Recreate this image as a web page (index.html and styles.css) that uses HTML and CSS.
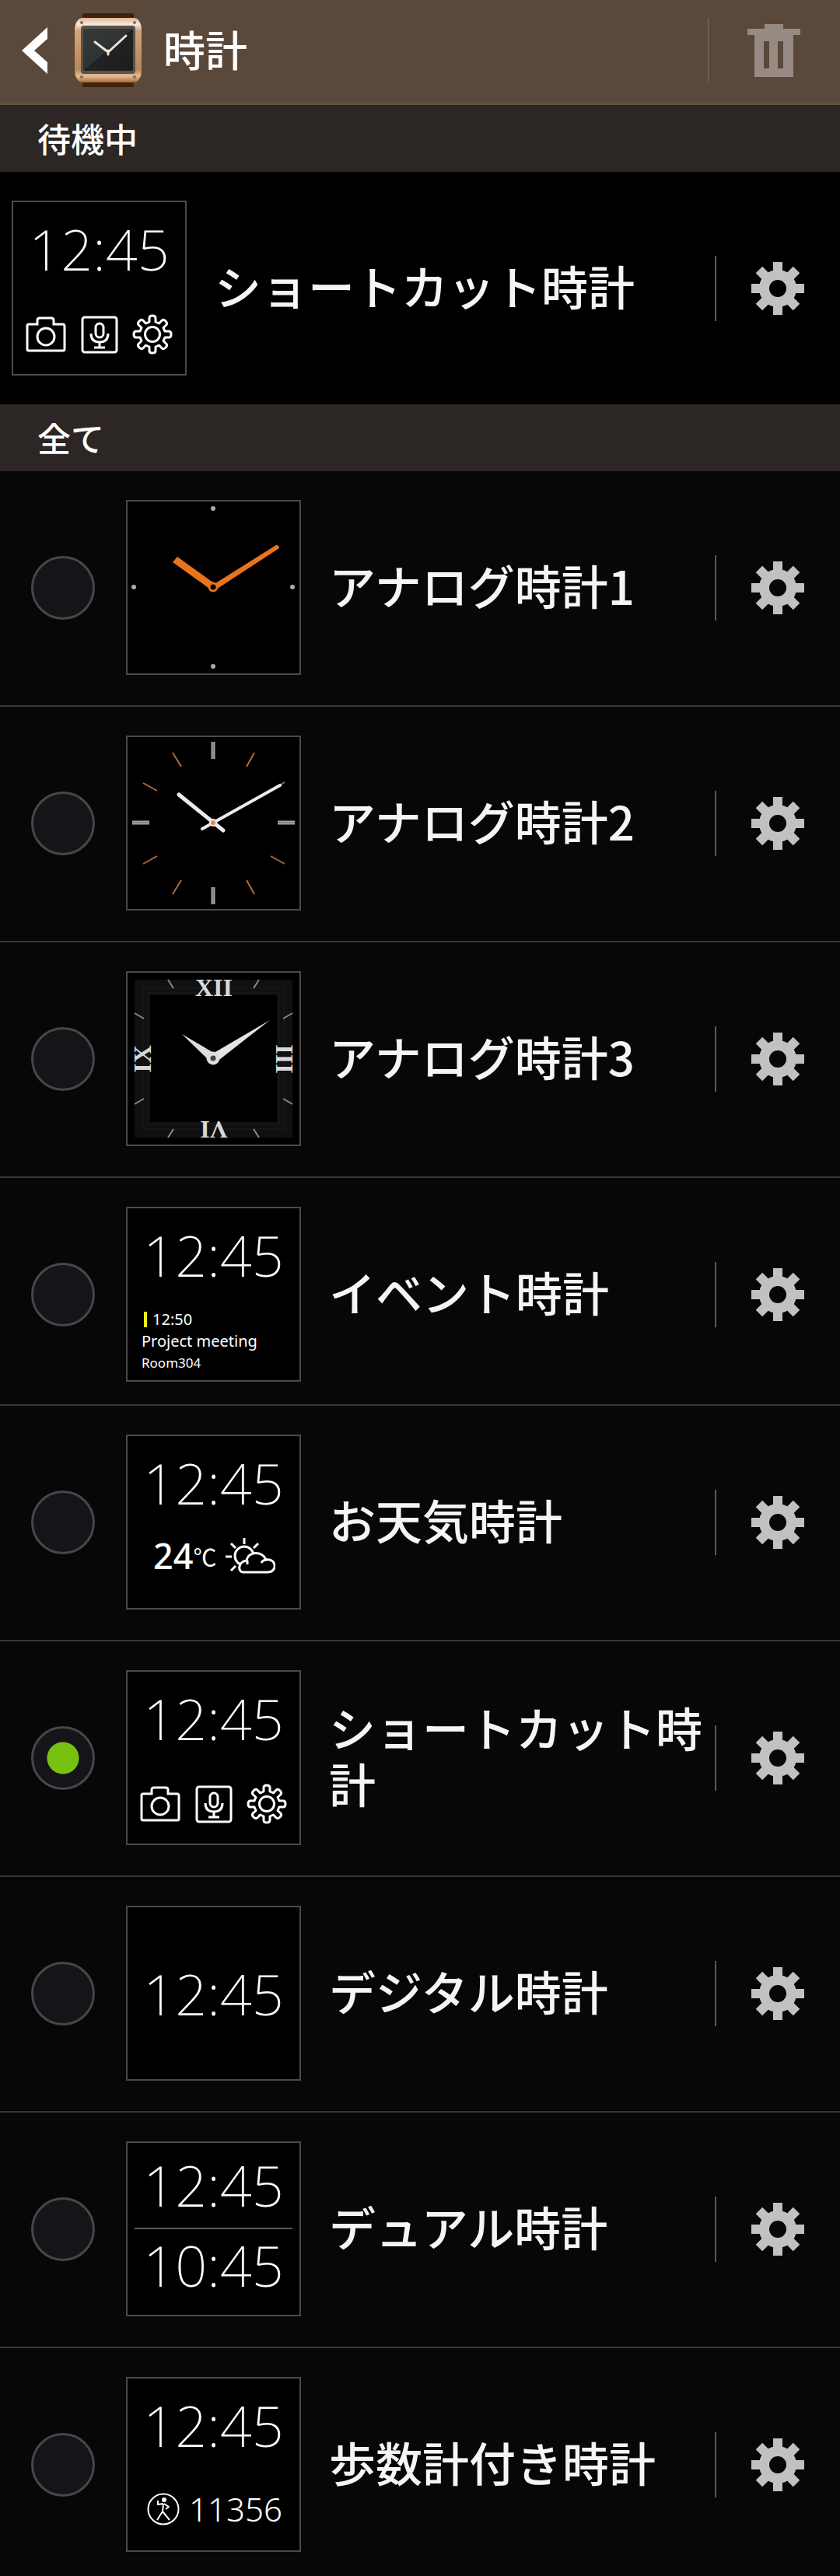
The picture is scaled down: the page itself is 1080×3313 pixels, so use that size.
FILE: index.html
```html
<!DOCTYPE html>
<html lang="ja">
<head>
    <meta charset="UTF-8">
    <meta name="viewport" content="width=device-width, initial-scale=1.0">
    <title>時計</title>
    <link rel="stylesheet" href="styles.css">
</head>
<body>
    <!-- Shared icons -->
    <svg class="sprite" aria-hidden="true">
        <symbol id="gear" viewBox="-34 -34 68 68">
            <circle r="17.5" fill="none" stroke="#c1c1c1" stroke-width="13"/>
            <g fill="#c1c1c1">
                <path id="teeth" d="M-6 -34H6V-21H-6ZM-6 21H6V34H-6ZM-34 -6H-21V6H-34ZM21 -6H34V6H21Z"/>
                <use href="#teeth" transform="rotate(45)"/>
            </g>
        </symbol>
        <symbol id="camera" viewBox="0 0 52 52">
            <g fill="none" stroke="#fff" stroke-width="3">
                <path d="M4 13H15V8Q15 5 18 5H33Q36 5 36 8V13H48Q50 13 50 16V45Q50 47 48 47H4Q2 47 2 45V15Q2 13 4 13Z"/>
                <circle cx="26" cy="29" r="11"/>
            </g>
        </symbol>
        <symbol id="mic" viewBox="0 0 52 52">
            <g fill="none" stroke="#fff" stroke-width="3">
                <rect x="4" y="4" width="44" height="45" rx="3"/>
                <rect x="21" y="12" width="10" height="18" rx="5"/>
                <path d="M15 25Q15 36 26 36Q37 36 37 25M26 36V43M19 43H33"/>
            </g>
        </symbol>
        <symbol id="cog" viewBox="-26 -26 52 52">
            <g fill="none" stroke="#fff" stroke-width="3" stroke-linejoin="round">
                <circle r="9.5"/>
                <path d="M-4 -16V-21Q-4 -24 0 -24Q4 -24 4 -21V-16L8.500 -14L12 -17.700Q14.100 -19.800 17 -17Q19.800 -14.100 17.700 -12L14 -8.500L16 -4H21Q24 -4 24 0Q24 4 21 4H16L14 8.500L17.700 12Q19.800 14.100 17 17Q14.100 19.800 12 17.700L8.500 14L4 16V21Q4 24 0 24Q-4 24 -4 21V16L-8.500 14L-12 17.700Q-14.100 19.800 -17 17Q-19.800 14.100 -17.700 12L-14 8.500L-16 4H-21Q-24 4 -24 0Q-24 -4 -21 -4H-16L-14 -8.500L-17.700 -12Q-19.800 -14.100 -17 -17Q-14.100 -19.800 -12 -17.700L-8.500 -14Z"/>
            </g>
        </symbol>
    </svg>

    <header class="header">
        <button class="back-btn" aria-label="戻る">
            <svg width="34" height="62" viewBox="0 0 34 62"><path d="M33 1V16L16 31L33 46V61L0 31Z" fill="#fff"/></svg>
        </button>
        <svg class="app-icon" width="88" height="96" viewBox="0 0 88 96">
            <defs>
                <linearGradient id="gold" x1="0" y1="0" x2="0" y2="1">
                    <stop offset="0" stop-color="#e0b898"/>
                    <stop offset=".1" stop-color="#f8e8dc"/>
                    <stop offset=".2" stop-color="#d3a47c"/>
                    <stop offset=".8" stop-color="#b88655"/>
                    <stop offset=".9" stop-color="#e5bd94"/>
                    <stop offset="1" stop-color="#a56c3b"/>
                </linearGradient>
                <linearGradient id="glass" x1="0" y1="0" x2="1" y2="1">
                    <stop offset="0" stop-color="#363939"/>
                    <stop offset=".5" stop-color="#303333"/>
                    <stop offset=".5" stop-color="#222"/>
                    <stop offset="1" stop-color="#1d1d1d"/>
                </linearGradient>
            </defs>
            <rect x="10" y="0" width="66" height="95" rx="2" fill="#3f220d"/>
            <path d="M10 6H76Q81 6 84 12Q86 16 86 22V73Q86 79 84 83Q81 89 76 89H10Q5 89 2 83Q0 79 0 73V22Q0 16 2 12Q5 6 10 6Z" fill="url(#gold)"/>
            <rect x="8" y="16" width="70" height="62" rx="4" fill="#57524a"/>
            <rect x="11" y="20" width="64" height="54" rx="2" fill="url(#glass)"/>
            <g fill="#8b6b51">
                <circle cx="9" cy="12" r="2"/><circle cx="77" cy="12" r="2"/>
                <circle cx="9" cy="82" r="2"/><circle cx="77" cy="82" r="2"/>
            </g>
            <path d="M26 37L43 50L66 29M43 48V53" fill="none" stroke="#efe2d4" stroke-width="3" stroke-linecap="round"/>
        </svg>
        <h1>時計</h1>
        <button class="side-btn delete-btn" aria-label="削除">
            <svg width="68" height="68" viewBox="0 0 68 68">
                <path fill="#978a82" fill-rule="evenodd" d="M22 0H46V6H68V14H59V68H9V14H0V6H22ZM21 22V57H28V22ZM39 22V57H46V22Z"/>
            </svg>
        </button>
    </header>

    <main>
        <h2 class="section-title">待機中</h2>
        <div class="row standby">
            <div class="thumb">
                <span class="time">12:45</span>
                <div class="shortcuts">
                    <svg><use href="#camera"/></svg>
                    <svg><use href="#mic"/></svg>
                    <svg><use href="#cog"/></svg>
                </div>
            </div>
            <span class="name">ショートカット時計</span>
            <button class="side-btn" aria-label="設定"><svg class="gear"><use href="#gear"/></svg></button>
        </div>

        <h2 class="section-title">全て</h2>
        <ul class="clock-list">
            <li class="row">
                <input type="radio" name="clock" id="analog1">
                <div class="thumb">
                    <svg class="dial" viewBox="2 2 221 221">
                        <g fill="#aaa">
                            <circle cx="112" cy="11" r="3"/><circle cx="112" cy="214" r="3"/>
                            <circle cx="10" cy="112" r="3"/><circle cx="214" cy="112" r="3"/>
                        </g>
                        <path d="M60 80L66 73L116 109L110 116Z" fill="#e8741c"/>
                        <path d="M112 109L193 58Q197 58 197 62L116 115Z" fill="#e8741c"/>
                        <circle cx="112" cy="112" r="5" fill="#000" stroke="#e8741c" stroke-width="3"/>
                    </svg>
                </div>
                <label class="name" for="analog1">アナログ時計1</label>
                <button class="side-btn" aria-label="設定"><svg class="gear"><use href="#gear"/></svg></button>
            </li>
            <li class="row">
                <input type="radio" name="clock" id="analog2">
                <div class="thumb">
                    <svg class="dial" viewBox="2 2 221 221">
                        <path d="M112 8V30M112 195V217M8 112H30M195 112H217" stroke="#a5a5a5" stroke-width="5"/>
                        <path d="M112 8V30M112 195V217M8 112H30M195 112H217" stroke="#666" stroke-width="1"/>
                        <path d="M60 22L71 40M165 22L155 40M22 61L40 71M204 60L186 71M22 165L40 155M186 155L204 165M60 204L71 186M165 204L155 186" stroke="#b06a38" stroke-width="2"/>
                        <g fill="none" stroke="#ececec" stroke-linecap="round">
                            <path d="M68 76L125 122" stroke-width="5"/>
                            <path d="M198 64L98 120" stroke-width="4"/>
                        </g>
                        <circle cx="112" cy="112" r="4" fill="#e38a4c" stroke="#eee" stroke-width="2"/>
                    </svg>
                </div>
                <label class="name" for="analog2">アナログ時計2</label>
                <button class="side-btn" aria-label="設定"><svg class="gear"><use href="#gear"/></svg></button>
            </li>
            <li class="row">
                <input type="radio" name="clock" id="analog3">
                <div class="thumb">
                    <svg class="dial" viewBox="2 2 221 221">
                        <rect x="21" y="21" width="183" height="183" fill="none" stroke="#101010" stroke-width="20"/>
                        <rect x="22" y="22" width="181" height="181" fill="none" stroke="#1a1a1a"/>
                        <rect x="28" y="28" width="169" height="169" fill="none" stroke="#1a1a1a"/>
                        <path d="M54 11L61 22M171 11L164 22M11 54L23 61M214 54L202 61M11 171L23 164M214 171L202 164M54 214L61 203M171 214L164 203" stroke="#8a8a8a" stroke-width="2"/>
                        <g class="numerals">
                            <text x="113" y="32">XII</text>
                            <text transform="translate(193 113) rotate(90)">III</text>
                            <text transform="translate(113 193) rotate(180)">VI</text>
                            <text transform="translate(32 113) rotate(-90)">IX</text>
                        </g>
                        <path d="M72 81L116 107L108 116Z" fill="#ddd"/>
                        <path d="M185 63L108 108L116 117Z" fill="#e4e4e4"/>
                        <circle cx="112" cy="112" r="6" fill="#444" stroke="#ddd" stroke-width="5"/>
                    </svg>
                </div>
                <label class="name" for="analog3">アナログ時計3</label>
                <button class="side-btn" aria-label="設定"><svg class="gear"><use href="#gear"/></svg></button>
            </li>
            <li class="row compact">
                <input type="radio" name="clock" id="event">
                <div class="thumb">
                    <span class="time">12:45</span>
                    <div class="event">
                        <span class="event-time">12:50</span>
                        <span>Project meeting</span>
                        <span class="event-room">Room304</span>
                    </div>
                </div>
                <label class="name" for="event">イベント時計</label>
                <button class="side-btn" aria-label="設定"><svg class="gear"><use href="#gear"/></svg></button>
            </li>
            <li class="row">
                <input type="radio" name="clock" id="weather">
                <div class="thumb">
                    <span class="time">12:45</span>
                    <div class="weather">
                        <span class="temp">24</span><span class="unit">℃</span>
                        <svg width="64" height="46" viewBox="0 0 64 46">
                            <g fill="none" stroke="#fff" stroke-width="3">
                                <circle cx="24" cy="23" r="12"/>
                                <path d="M24 0V8M7 7L13 13M0 24H8M7 42L13 36M42 7L36 13"/>
                                <path d="M23 44C15 44 16 30 27 29C29 17 47 16 52 28C66 26 67 44 54 44Z" fill="#000"/>
                                <path d="M28 34V29M46 32Q48 28 53 28"/>
                            </g>
                        </svg>
                    </div>
                </div>
                <label class="name" for="weather">お天気時計</label>
                <button class="side-btn" aria-label="設定"><svg class="gear"><use href="#gear"/></svg></button>
            </li>
            <li class="row">
                <input type="radio" name="clock" id="shortcut" checked>
                <div class="thumb">
                    <span class="time">12:45</span>
                    <div class="shortcuts">
                        <svg><use href="#camera"/></svg>
                        <svg><use href="#mic"/></svg>
                        <svg><use href="#cog"/></svg>
                    </div>
                </div>
                <label class="name" for="shortcut">ショートカット時計</label>
                <button class="side-btn" aria-label="設定"><svg class="gear"><use href="#gear"/></svg></button>
            </li>
            <li class="row">
                <input type="radio" name="clock" id="digital">
                <div class="thumb centered">
                    <span class="time">12:45</span>
                </div>
                <label class="name" for="digital">デジタル時計</label>
                <button class="side-btn" aria-label="設定"><svg class="gear"><use href="#gear"/></svg></button>
            </li>
            <li class="row">
                <input type="radio" name="clock" id="dual">
                <div class="thumb dual">
                    <span class="time">12:45</span>
                    <span class="time">10:45</span>
                </div>
                <label class="name" for="dual">デュアル時計</label>
                <button class="side-btn" aria-label="設定"><svg class="gear"><use href="#gear"/></svg></button>
            </li>
            <li class="row compact">
                <input type="radio" name="clock" id="pedometer">
                <div class="thumb">
                    <span class="time">12:45</span>
                    <div class="steps">
                        <svg width="42" height="42" viewBox="0 0 42 42">
                            <circle cx="21" cy="21" r="19.500" fill="none" stroke="#fff" stroke-width="2"/>
                            <circle cx="22" cy="9" r="3" fill="#fff"/>
                            <path d="M21 14L14 15V10M22 14L28 18L24 21M21 14L20 24L13 35M20 24L29 35" fill="none" stroke="#fff" stroke-width="2" stroke-linejoin="round"/>
                        </svg>
                        <span>11356</span>
                    </div>
                </div>
                <label class="name" for="pedometer">歩数計付き時計</label>
                <button class="side-btn" aria-label="設定"><svg class="gear"><use href="#gear"/></svg></button>
            </li>
        </ul>
    </main>
</body>
</html>
```

FILE: styles.css
```css
* {
    box-sizing: border-box;
}

body {
    margin: 0;
    background: #070707;
    color: #f5f5f5;
    font-family: "Noto Sans CJK JP", sans-serif;
    font-weight: 500;
}

svg {
    display: block;
    flex-shrink: 0;
}

.sprite {
    position: absolute;
    width: 0;
    height: 0;
}

button {
    background: none;
    border: none;
    padding: 0;
    cursor: pointer;
}

/* Header */
.header {
    display: flex;
    align-items: center;
    height: 135px;
    padding: 0 0 4px 28px;
    background: #5a483b;
    border-bottom: 2px solid #66513f;
}

.app-icon {
    margin-left: 34px;
}

h1 {
    flex: 1;
    margin: 0;
    padding: 0 0 4px 26px;
    font-size: 54px;
    line-height: 72px;
    font-weight: 500;
    color: #fff;
}

.side-btn {
    display: flex;
    align-items: center;
    width: 161px;
    height: 84px;
    padding-left: 45px;
    border-left: 2px solid #5a5a5a;
    flex-shrink: 0;
}

.delete-btn {
    width: 170px;
    padding-left: 50px;
    border-left: 1px solid #7d6e64;
}

.gear {
    width: 68px;
    height: 68px;
}

.section-title {
    margin: 0;
    padding: 12px 48px 14px;
    background: #2c2624;
    font-size: 43px;
    line-height: 60px;
    font-weight: 500;
    color: #fff;
}

/* Rows */
.clock-list {
    list-style: none;
    margin: 0;
    padding: 0;
}

.row {
    display: flex;
    align-items: center;
    padding: 37px 0 39px 40px;
    border-bottom: 2px solid #373737;
}

.row.compact {
    padding-bottom: 29px;
}

.row:last-child {
    border-bottom: none;
}

.row.standby {
    padding: 37px 0 37px 15px;
    background: #000;
    border-bottom: none;
}

.name {
    flex: 1;
    padding: 0 0 8px 36px;
    font-size: 60px;
    line-height: 72px;
    word-break: break-all;
}

input[type="radio"] {
    appearance: none;
    flex-shrink: 0;
    width: 82px;
    height: 82px;
    margin: 0 40px 0 0;
    border: 3px solid #474747;
    border-radius: 50%;
    background: #141419;
}

input[type="radio"]:checked {
    background: radial-gradient(circle, #77c211 20px, #141419 21px);
}

/* Clock previews */
.thumb {
    flex-shrink: 0;
    width: 225px;
    height: 225px;
    padding-top: 22px;
    border: 2px solid #4a4a4a;
    background: #000;
    color: #fff;
    font-family: "Noto Sans", sans-serif;
    font-weight: 400;
}

.time {
    display: block;
    font-size: 72px;
    line-height: 76px;
    font-weight: 200;
    text-align: center;
}

.thumb:has(.dial) {
    padding: 0;
}

.dial {
    overflow: visible;
}

.numerals {
    fill: #d8d8d8;
    font-family: "Liberation Serif", serif;
    font-size: 32px;
    font-weight: bold;
    text-anchor: middle;
}

.shortcuts {
    display: flex;
    justify-content: space-between;
    padding: 46px 16px 0;
}

.shortcuts svg {
    width: 52px;
    height: 52px;
}

.event {
    display: flex;
    flex-direction: column;
    padding: 31px 0 0 18px;
    font-size: 20px;
    line-height: 28px;
}

.event-time::before {
    content: "";
    display: inline-block;
    width: 4px;
    height: 20px;
    margin: 0 7px 0 3px;
    background: #eef01e;
    vertical-align: -3px;
}

.event-room {
    font-size: 17px;
}

.weather {
    display: flex;
    align-items: center;
    padding: 26px 0 0 33px;
}

.temp {
    font-size: 45px;
    line-height: 60px;
    font-weight: 500;
}

.unit {
    margin-right: 12px;
    font-family: "Noto Sans CJK JP", sans-serif;
    font-size: 30px;
    line-height: 60px;
}

.centered {
    display: flex;
    align-items: center;
    justify-content: center;
    padding: 0;
}

.dual {
    padding: 16px 9px 0;
}

.dual .time + .time {
    margin-top: 17px;
    border-top: 2px solid #5a5a5a;
    padding-top: 8px;
}

.steps {
    display: flex;
    align-items: center;
    gap: 12px;
    padding: 40px 0 0 25px;
    font-size: 42px;
    line-height: 60px;
    font-weight: 300;
}
```
